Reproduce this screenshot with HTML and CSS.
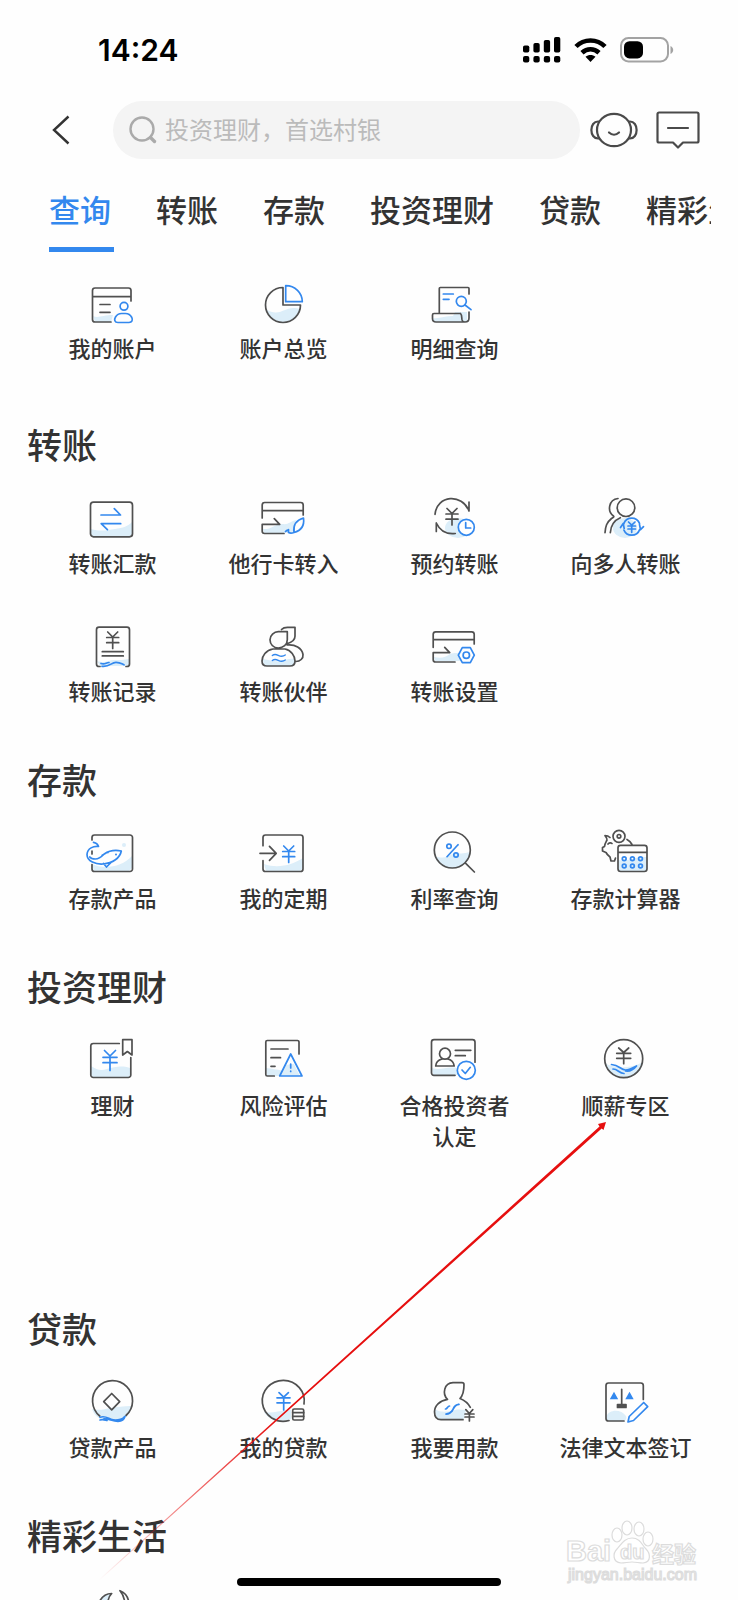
FILE: index.html
```html
<!DOCTYPE html>
<html lang="zh-CN">
<head>
<meta charset="UTF-8">
<meta name="viewport" content="width=device-width, initial-scale=1.0">
<title>全部功能</title>
<link rel="stylesheet" href="styles.css">
</head>
<body>
    <!-- shared icon parts -->
    <svg class="defs" width="0" height="0" aria-hidden="true">
        <defs>
            <path id="yen" d="M-5-9L0-4l5-5M-6-3.5H6M-6 1.7H6M0-4V7.5"/>
        </defs>
    </svg>

    <div class="status-bar">
        <span class="time">14:24</span>
        <div class="status-icons">
            <svg width="38" height="26" viewBox="0 0 38 26">
                <rect x="0" y="8.5" width="6.3" height="7" rx="1.8"/>
                <rect x="10.4" y="6" width="6.3" height="9.5" rx="1.8"/>
                <rect x="20.8" y="3" width="6.3" height="12.5" rx="1.8"/>
                <rect x="31" y="0" width="6.3" height="15.5" rx="1.8"/>
                <rect x="0" y="19" width="6.3" height="6.5" rx="2"/>
                <rect x="10.4" y="19" width="6.3" height="6.5" rx="2"/>
                <rect x="20.8" y="19" width="6.3" height="6.5" rx="2"/>
                <rect x="31" y="19" width="6.3" height="6.5" rx="2"/>
            </svg>
            <svg width="33" height="24" viewBox="0 0 33 24">
                <path d="M2 8.5C10 .4 23 .4 31 8.5M8 14.7c5-4.7 12-4.7 17 0" fill="none" stroke="#000" stroke-width="4.6"/>
                <path d="M16.500 24l-5-5.200c3-2.400 7-2.400 10 0z"/>
            </svg>
            <svg width="54" height="26" viewBox="0 0 54 26">
                <rect x="1" y="1" width="47" height="23.5" rx="7.5" fill="none" stroke="#a3a3a3" stroke-width="2"/>
                <rect x="4" y="4.2" width="19" height="17.2" rx="5.5"/>
                <path d="M50.500 9c3.600 1.500 3.600 6.500 0 8z" fill="#a3a3a3"/>
            </svg>
        </div>
    </div>

    <header class="navbar">
        <button type="button" class="icon-btn back" aria-label="返回">
            <svg width="18" height="30" viewBox="0 0 18 30"><path d="M16.500 1.500L2 15l14.500 13.500" stroke="#333" stroke-width="2.400" fill="none"/></svg>
        </button>
        <label class="search">
            <svg width="28" height="28" viewBox="0 0 28 28"><circle cx="13" cy="13" r="11.500"/><path d="M21.500 21.500l4 4" stroke-width="3.400"/></svg>
            <input type="search" placeholder="投资理财，首选村银" aria-label="搜索">
        </label>
        <button type="button" class="icon-btn" aria-label="客服">
            <svg class="line" width="48" height="36" viewBox="0 0 48 36"><ellipse cx="24" cy="18" rx="17" ry="16.200"/><path d="M8.500 9.500C-1 9-1 27 8.500 26.500M39.500 9.500c9.500-.5 9.500 17.500 0 17M19 20.500c3 2.800 7 2.800 10 0"/></svg>
        </button>
        <button type="button" class="icon-btn message" aria-label="消息">
            <svg class="line" width="44" height="38" viewBox="0 0 44 38"><path d="M3 1.500h38a1.500 1.500 0 0 1 1.500 1.500v27a1.500 1.500 0 0 1-1.500 1.500H27l-5 5-5-5H3A1.500 1.500 0 0 1 1.500 30V3A1.500 1.500 0 0 1 3 1.500zM12 17h20"/></svg>
        </button>
    </header>

    <nav class="tabs">
        <a href="#query" class="tab active">查询</a>
        <a href="#transfer" class="tab">转账</a>
        <a href="#deposit" class="tab">存款</a>
        <a href="#invest" class="tab">投资理财</a>
        <a href="#loan" class="tab">贷款</a>
        <a href="#life" class="tab">精彩生活</a>
    </nav>

    <main>
        <section class="section section-first" id="query">
            <div class="grid">
                <a href="#" class="item">
                    <svg class="icon" viewBox="0 0 56 56">
                        <path class="wash" d="M10 40c5 2.500 10-1 20-1l-2 7H12z"/>
                        <path d="M28 46H12a2.500 2.500 0 0 1-2.500-2.500v-29A2.500 2.500 0 0 1 12 12h33.500a2.500 2.500 0 0 1 2.500 2.500V25M9.500 20.700H48M17 28.500h10M17 36.300h10"/>
                        <circle class="blue" cx="41" cy="30.300" r="3.900"/>
                        <path class="blue" d="M35 46.500c-3.500 0-4-3-2.500-5.500 1.500-2.500 3.500-3.500 6-3.500h4c3 0 5 1.500 6.300 4 1.200 2.500.3 5-2.800 5z"/>
                    </svg>
                    <span>我的账户</span>
                </a>
                <a href="#" class="item">
                    <svg class="icon" viewBox="0 0 56 56">
                        <path class="wash" d="M12 33c8 6 14 3 19 1s8-3 15-1c-2 8-9 13-17 13s-15-5-17-13z"/>
                        <path d="M29 11.500V29h17.500A17.500 17.500 0 1 1 29 11.500z"/>
                        <path class="blue" d="M31.700 9.700v16h16.600c0-9-7.300-16-16.600-16z"/>
                    </svg>
                    <span>账户总览</span>
                </a>
                <a href="#" class="item">
                    <svg class="icon" viewBox="0 0 56 56">
                        <path class="wash" d="M8 42c6 1 12-2 20-2l2-4h12v10H9z"/>
                        <path d="M14.300 37V12.500a1 1 0 0 1 1-1H43a1 1 0 0 1 1 1V18M35.500 37.500H9a1.500 1.500 0 0 0-1.500 1.500v3.500C7.500 45 9 46 11 46h29c3 0 4-1.500 4-4v-6M35.500 37.500c3 3-1 8 4.500 8.500"/>
                        <path class="blue" d="M18.300 18h10M18.300 23.300H24M40 29l6 4.700"/>
                        <circle class="blue" cx="36.300" cy="25.300" r="5"/>
                    </svg>
                    <span>明细查询</span>
                </a>
            </div>
        </section>

        <section class="section" id="transfer">
            <h2>转账</h2>
            <div class="grid">
                <a href="#" class="item">
                    <svg class="icon" viewBox="0 0 56 56">
                        <path class="wash" d="M8 38c10 3 17 1 24 0 8-1 13-3 17-7v12l-2 3H10l-2-2z"/>
                        <rect x="7.500" y="11.200" width="42" height="34.600" rx="3"/>
                        <path class="blue" d="M18 24h19.500l-6.200-6.300M37.700 32.700H18.200l6.200 6"/>
                    </svg>
                    <span>转账汇款</span>
                </a>
                <a href="#" class="item">
                    <svg class="icon" viewBox="0 0 56 56">
                        <path class="wash" d="M9 38c8 1 13-6 20-5 5 1 8-3 13-4l-3 12-9 1H10z"/>
                        <path d="M8.200 27V14a2.500 2.500 0 0 1 2.500-2.500h36a2.500 2.500 0 0 1 2.500 2.500v10M8.200 19.700h41M20.300 27.700l5.400 5.600H8.200v7c0 1.500.8 2.200 2.300 2.200H30"/>
                        <path class="blue" d="M49.500 27c-7 2-10.500 7-9.500 14.500 7.500-2 10.500-7 9.500-14.500zM31.500 40.500c2-2 3-1 3-2v3c2 1 4 .5 5.500 0"/>
                    </svg>
                    <span>他行卡转入</span>
                </a>
                <a href="#" class="item">
                    <svg class="icon" viewBox="0 0 56 56">
                        <ellipse class="wash" cx="33" cy="37" rx="13" ry="10"/>
                        <path d="M10 23.300C12 4 37 2 44 20v-9M30.300 42.500c-8 1-15-2-19-10.500v8.500"/>
                        <use href="#yen" x="27" y="26.500"/>
                        <circle class="blue clear" cx="41.300" cy="36.300" r="8"/>
                        <path class="blue" d="M40.700 31.700V37h5"/>
                    </svg>
                    <span>预约转账</span>
                </a>
                <a href="#" class="item">
                    <svg class="icon" viewBox="0 0 56 56">
                        <ellipse class="wash" cx="29" cy="37" rx="12" ry="10"/>
                        <circle cx="30" cy="16.700" r="8.800"/>
                        <path d="M22 7.500c-9.500 1-11 13-4.500 17.500 1 1-1 1.500-2 2.500-5 4-6 8-6.500 14.200M24.300 26.700c-7 3-9.500 8-10 15"/>
                        <circle class="blue" cx="35.700" cy="35.700" r="8.500" stroke-dasharray="20 6.700" stroke-dashoffset="-3"/>
                        <path class="blue" d="M24.500 36.500l2.700-4 1 5M43.500 33.500l1 5.200 3-3"/>
                        <path class="blue" d="M32.500 31l3.200 3.200L39 31M32 35h7.500M32 38h7.500M35.700 34.500v6.800"/>
                    </svg>
                    <span>向多人转账</span>
                </a>
                <a href="#" class="item">
                    <svg class="icon" viewBox="0 0 56 56">
                        <path class="wash" d="M14 42c8 3 12-1 17-1s10 0 15-1v6l-4 1H17z"/>
                        <path d="M17 47.500h-1a2.500 2.500 0 0 1-2.500-2.500V10.700A2.500 2.500 0 0 1 16 8.200h28a2.500 2.500 0 0 1 2.500 2.500V45a2.500 2.500 0 0 1-2.500 2.500h-1M19.300 32.700h21M19.300 36.900h21"/>
                        <use href="#yen" x="29.700" y="22"/>
                        <path class="blue" d="M18 44.500c4 1.500 5-1 8-1M19 47.300c8 1 9-4 14-4 4 0 5 1 8 2.500"/>
                    </svg>
                    <span>转账记录</span>
                </a>
                <a href="#" class="item">
                    <svg class="icon" viewBox="0 0 56 56">
                        <path class="wash" d="M9 40c7 1 12 3 18 2 5-1 8-3 14-2 0 5-2 7-5 7H13c-3 0-4-3-4-7z"/>
                        <path d="M27.500 10.500c1.500-1.600 3-2.200 6-2.200H41v9c0 4-3 6-8 7.500M33.300 12.700v8c0 5-4 8.300-9 8.300s-8.300-4-8.300-8.300 4-8 8.300-8zM19 30h12c6 1 10 7 10 12 0 3.500-2 5-5 5H13c-3 0-5-1.500-5-5 0-5 4-11 11-12zM33 26c8-1 15 3 16 9.500.5 4-3 7-7 7"/>
                        <path class="blue thin" d="M18.300 36.500c5-4 7 4 13-.5M18.300 41.500c5-4 7 4 13-.5"/>
                    </svg>
                    <span>转账伙伴</span>
                </a>
                <a href="#" class="item">
                    <svg class="icon" viewBox="0 0 56 56">
                        <path class="wash" d="M9 38c7 2 12 0 16-3 4-2 8 0 12-2l-4 4 3 5H10z"/>
                        <path d="M8.200 28.300v-13a2.500 2.500 0 0 1 2.500-2.500h36a2.500 2.500 0 0 1 2.500 2.500V25M8.200 20.700h41M19.700 28.300l5 5.400H8.200v7c0 1.500.8 2.300 2.300 2.300H30"/>
                        <path class="blue" d="M37.300 28.700h8l4 7.500-4 7.500h-8l-4-7.500z"/>
                        <circle class="blue" cx="41.300" cy="36.200" r="3.200"/>
                    </svg>
                    <span>转账设置</span>
                </a>
            </div>
        </section>

        <section class="section" id="deposit">
            <h2>存款</h2>
            <div class="grid">
                <a href="#" class="item">
                    <svg class="icon" viewBox="0 0 56 56">
                        <path class="wash" d="M9 38c12 6 30 3 40-8v12l-3 3H11z"/>
                        <circle class="wash" cx="41" cy="19" r="2"/>
                        <path d="M9 14v-2.500A2.500 2.500 0 0 1 11.500 9H47a2.500 2.500 0 0 1 2.500 2.500V43a2.500 2.500 0 0 1-2.500 2.500H11.500A2.500 2.500 0 0 1 9 43v-4.500M9 25v3"/>
                        <path class="blue" d="M10.500 16.300c3 .7 4.500 2 5 4.200-5-.5-11 1.500-11.500 8 0 7 9 10 16 9.500 10-1 17-6 18.300-13-5-1-12-.5-17 3-3 3-6 5-9 5s-4.500-.5-5.500-2M19 29.500c2-1.500 4-3 6-3M20.500 37.500l3 3.500 5-5"/>
                        <circle class="dot" cx="33" cy="28.500" r="1"/>
                    </svg>
                    <span>存款产品</span>
                </a>
                <a href="#" class="item">
                    <svg class="icon" viewBox="0 0 56 56">
                        <path class="wash" d="M10 38c14 5 28 1 39-6v10l-3 3H12z"/>
                        <path d="M9 19.700v-8.200A2.500 2.500 0 0 1 11.500 9h35a2.500 2.500 0 0 1 2.500 2.500V43a2.500 2.500 0 0 1-2.500 2.500h-35A2.500 2.500 0 0 1 9 43v-8.300M6 27.300h16M15.500 20.300l6.700 7-6.700 7"/>
                        <use class="blue" href="#yen" x="34.700" y="29"/>
                    </svg>
                    <span>我的定期</span>
                </a>
                <a href="#" class="item">
                    <svg class="icon" viewBox="0 0 56 56">
                        <path class="wash" d="M10 30c8 3 12 1 18-2 5-1 11 0 17-2 0 9-8 16-18 16S11 36 10 30z"/>
                        <circle cx="27.300" cy="24" r="18"/>
                        <path d="M40.700 37.300l8.700 8.700"/>
                        <path class="blue" d="M33 18.700l-11 12"/>
                        <circle class="blue" cx="24" cy="20.300" r="2.200"/>
                        <circle class="blue" cx="31" cy="29" r="2.200"/>
                    </svg>
                    <span>利率查询</span>
                </a>
                <a href="#" class="item">
                    <svg class="icon" viewBox="0 0 56 56">
                        <path class="wash" d="M22 34c10 2 18-4 29-3v13l-2 2H24l-2-3z"/>
                        <circle cx="23" cy="10.300" r="6"/>
                        <circle cx="23" cy="10.300" r="1.800"/>
                        <path d="M14 11.500c-2-2-3-2-5-2 1 1.500 2.500 3 2 4.500-1 2-2.500 4-2.500 6.500l-2 1v3.500l3.500 1.500c1 2 2 3 4 4.500l1 4h3.500l1-3M12 18c1-1.500 3-1.500 4-.5M31 13.500c2 1 4 3 5 5"/>
                        <path d="M24.500 19.300h24a2.500 2.500 0 0 1 2.500 2.500v21a2.700 2.700 0 0 1-2.700 2.700H24.700a2.700 2.700 0 0 1-2.700-2.700v-21a2.500 2.500 0 0 1 2.500-2.500zM22 26.300h29"/>
                        <g class="blue"><circle cx="28.200" cy="32.700" r="1.900"/><circle cx="36.400" cy="32.700" r="1.900"/><circle cx="44.500" cy="32.700" r="1.900"/><circle cx="28.200" cy="40" r="1.900"/><circle cx="36.400" cy="40" r="1.900"/><circle cx="44.500" cy="40" r="1.900"/></g>
                    </svg>
                    <span>存款计算器</span>
                </a>
            </div>
        </section>

        <section class="section" id="invest">
            <h2>投资理财</h2>
            <div class="grid grid-tall">
                <a href="#" class="item">
                    <svg class="icon" viewBox="0 0 56 56">
                        <path class="wash" d="M8 33c6 4 10 5 16 3 8-2 14-4 23-1v7l-2 3H10l-2-3z"/>
                        <path d="M36.300 10.500h-26A2.500 2.500 0 0 0 7.800 13v29a2.500 2.500 0 0 0 2.500 2.500h35a2.500 2.500 0 0 0 2.500-2.500V24.500M39.700 6.700H49V22l-4.600-3.500L39.700 22z"/>
                        <path class="blue" d="M21.500 17.500l5.500 5.500 5.500-5.500M20 24.300h14M20 29.700h14M27 23v14.500"/>
                    </svg>
                    <span>理财</span>
                </a>
                <a href="#" class="item">
                    <svg class="icon" viewBox="0 0 56 56">
                        <path class="wash" d="M12 35c6 1 10 1 17 3l3-6 8-1 6 12H13z"/>
                        <path d="M20.300 43h-7a1.500 1.500 0 0 1-1.500-1.500V9a1.500 1.500 0 0 1 1.500-1.500h30A1.500 1.500 0 0 1 45 9v12M17 16h17M17 24.700h9.500M17 33.300h4"/>
                        <path class="blue" d="M36.700 21L48 43H25.700zM36.700 31v4M36.700 38.200v.3"/>
                    </svg>
                    <span>风险评估</span>
                </a>
                <a href="#" class="item">
                    <svg class="icon" viewBox="0 0 56 56">
                        <path class="wash" d="M7 35c8 3 15-2 25 0v7H8z"/>
                        <path d="M30 42.300H9A2.500 2.500 0 0 1 6.500 40V9.200A2.500 2.500 0 0 1 9 6.700h38.500A2.500 2.500 0 0 1 50 9.200v20M30.300 17.300h15.500M30.300 22.700h10M17 26c-4 1-6 3-6.300 7h18.500c-.5-4-2.500-6-6.200-7"/>
                        <circle cx="20" cy="20.700" r="5.500"/>
                        <circle class="blue clear" cx="41.300" cy="37.300" r="9"/>
                        <path class="blue" d="M37 37l3.300 3.500 5-6.200"/>
                    </svg>
                    <span>合格投资者<br>认定</span>
                </a>
                <a href="#" class="item">
                    <svg class="icon" viewBox="0 0 56 56">
                        <path class="wash" d="M9 30c9 6 26 6 38-1-1 10-10 16-19 16S10 38 9 30z"/>
                        <circle cx="27.700" cy="25.700" r="19"/>
                        <path d="M22.700 15l5 4.500 5-4.500M20.700 20.300h14M20.700 25.300h14M27.700 20v10.700"/>
                        <path class="blue" d="M15.500 31.500c8 .5 9 5.500 14 5.500 4 0 7-2 11-4-4 5-8 5.500-11 5M17 36c5 0 6 4.500 11 4.500"/>
                    </svg>
                    <span>顺薪专区</span>
                </a>
            </div>
        </section>

        <section class="section" id="loan">
            <h2>贷款</h2>
            <div class="grid">
                <a href="#" class="item">
                    <svg class="icon" viewBox="0 0 56 56">
                        <path class="wash" d="M9 34c8 2 12 0 19-1 6-1 12-2 20-2-1 8-5 13-12 15H22C15 43 11 40 9 34z"/>
                        <path d="M16.700 41A20 20 0 1 1 43 40.500M28.700 18.500l8 8.200-8 8.200-8-8.200z"/>
                        <path class="blue" d="M17 42.300c5-2 8 1 11 2s6 1 9.500 0 4-3 4.500-3c-1 4-4 5-7 5-6 0-9-3-14-2.500M17 45c3-1 5 0 7 .5"/>
                    </svg>
                    <span>贷款产品</span>
                </a>
                <a href="#" class="item">
                    <svg class="icon" viewBox="0 0 56 56">
                        <path class="wash" d="M10 37c7 2 17-2 27-2v9c-12 4-22 1-27-7z"/>
                        <path d="M50 29A21 20.500 0 1 0 35 45.500"/>
                        <path class="blue" d="M25 17.700l4.700 4.500 4.700-4.500M23 22.800h13M23 27.800h13M29.700 22.500V35"/>
                        <rect x="38.700" y="34" width="11" height="11" rx="1.500"/>
                        <path d="M38.700 37.700h11M38.700 41.300h11"/>
                    </svg>
                    <span>我的贷款</span>
                </a>
                <a href="#" class="item">
                    <svg class="icon" viewBox="0 0 56 56">
                        <path class="wash" d="M10 34c5 4 14 3 20 1 4-1 7 0 11 0l-2 9H14c-3-2-4-5-4-10z"/>
                        <path d="M38 44.700H16c-4 0-6.500-3-6.500-8 0-6 5-11 13-12.300C17 19 19 8 28 7.700h9c1.500 0 2 .5 2 2 0 6-.5 10-4 13.800 5 2 8 4.500 10.300 8.800"/>
                        <path class="blue" d="M34 29.300c-6 .5-5 4-7 7-1.500 2-3.500 2.500-6 2.800 5 0 6-3 7.500-5.500 1-2 2.500-4 5.500-4.300zM20.500 34c2 0 2-3 4-3"/>
                        <path d="M40.800 34.700l3.500 3.800 3.500-3.800M40 39h9M40 42h9M44.400 38.500V46"/>
                    </svg>
                    <span>我要用款</span>
                </a>
                <a href="#" class="item">
                    <svg class="icon" viewBox="0 0 56 56">
                        <path class="wash" d="M10 42c3-8 15-8 20-1 1 2 0 4-2 5H11z"/>
                        <path d="M28 46H12.500A2.500 2.500 0 0 1 10 43.500v-33A2.500 2.500 0 0 1 12.500 8h32.300a2.500 2.500 0 0 1 2.500 2.500v14M25.700 14.300v15"/>
                        <path class="solid" d="M21.500 29.500h8.500v3h-8.500z"/>
                        <path class="blue-solid" d="M18 16.700l4.200 7.500h-8.400zM33.500 16.700l4.200 7.500h-8.400z"/>
                        <path class="blue" d="M47.700 27.500l4 4.200L37.500 45.500 32 47l1.200-5.500z"/>
                    </svg>
                    <span>法律文本签订</span>
                </a>
            </div>
        </section>

        <section class="section" id="life">
            <h2>精彩生活</h2>
            <div class="grid">
                <a href="#" class="item">
                    <svg class="icon" viewBox="0 0 56 56">
                        <path class="wash" d="M17 18c2-4 5-6 11-6l-3 8v20H17z"/>
                        <path d="M17 18.500c3-5 6-7 11.700-7-3 3-3.700 5-3.700 9v20h-8zM37 8.700c5 2 7.500 5 8.500 10v22h-4v-22c-.5-4-2-7-4.500-10z"/>
                    </svg>
                </a>
            </div>
        </section>
    </main>

    <!-- pointer from the bottom left up to 顺薪专区 -->
    <svg class="pointer" width="508" height="460" viewBox="0 0 508 460" aria-hidden="true">
        <defs>
            <linearGradient id="fade" gradientUnits="userSpaceOnUse" x1="0" y1="458" x2="508" y2="0">
                <stop offset="0" stop-color="#e60f0f" stop-opacity="0"/>
                <stop offset=".15" stop-color="#e60f0f" stop-opacity=".5"/>
                <stop offset=".35" stop-color="#e60f0f"/>
            </linearGradient>
        </defs>
        <path fill="url(#fade)" d="M0 457.600L500.500 4.500 499 2l8-2-2.500 8-1.800-1.500L.6 458.200z"/>
    </svg>

    <svg class="watermark" width="134" height="70" viewBox="0 0 134 70" aria-label="Baidu 经验">
        <text x="0" y="41" font-size="29">Bai</text>
        <g>
            <ellipse cx="51" cy="15" rx="5" ry="7"/>
            <ellipse cx="61" cy="8" rx="5" ry="7"/>
            <ellipse cx="73" cy="9" rx="5" ry="7"/>
            <ellipse cx="82" cy="19" rx="5" ry="7"/>
            <path d="M66 18c8 0 10 7 14 11s6 13-3 14c-4 0-7-1-11-1s-7 1-11 1c-9-1-8-10-4-14s7-11 15-11z"/>
        </g>
        <text x="54" y="39" font-size="20">du</text>
        <text x="86" y="42" font-size="22">经验</text>
        <text class="url" x="2" y="60" font-size="16">jingyan.baidu.com</text>
    </svg>

    <div class="home-indicator"></div>
</body>
</html>
```
FILE: styles.css
```css
* {
    box-sizing: border-box;
}

body {
    margin: 0;
    height: 100vh;
    overflow: hidden;
    position: relative;
    background-color: #fefefe;
    color: #333;
    font-family: "Noto Sans CJK SC", "Noto Sans", sans-serif;
}

a {
    color: inherit;
    text-decoration: none;
}

.defs {
    position: absolute;
}

/* status bar */
.status-bar {
    display: flex;
    align-items: center;
    justify-content: space-between;
    height: 99px;
    padding: 0 64px 0 98px;
}

.time {
    font-family: Inter, sans-serif;
    font-size: 30px;
    font-weight: 600;
    color: #000;
}

.status-icons {
    display: flex;
    align-items: center;
    gap: 13px;
}

/* top navigation with search */
.navbar {
    display: flex;
    align-items: center;
    height: 58px;
    margin-top: 2px;
    padding: 0 38px 0 52px;
}

.icon-btn {
    display: flex;
    padding: 0;
    border: none;
    background: none;
    cursor: pointer;
}

.back {
    margin-right: 43px;
}

.message {
    margin-left: 18px;
}

.line {
    fill: none;
    stroke: #4a4a4a;
    stroke-width: 2.2;
    stroke-linecap: round;
    stroke-linejoin: round;
}

.search {
    flex: 1;
    display: flex;
    align-items: center;
    gap: 8px;
    height: 58px;
    margin-right: 10px;
    padding: 0 16px;
    border-radius: 29px;
    background-color: #f4f4f4;
}

.search svg {
    flex: none;
    fill: none;
    stroke: #aaa;
    stroke-width: 2.4;
    stroke-linecap: round;
}

.search input {
    flex: 1;
    min-width: 0;
    padding: 0 0 2px;
    border: none;
    outline: none;
    background: none;
    font-family: inherit;
    font-size: 24px;
    line-height: 36px;
}

.search input::placeholder {
    color: #bbb;
}

/* tabs */
.tabs {
    display: flex;
    gap: 42px;
    margin: 26px 27px 0 49px;
    overflow: hidden;
}

.tab {
    flex: none;
    padding: 0 3px 15px 0;
    border-bottom: 5px solid transparent;
    font-size: 31px;
    font-weight: 500;
    line-height: 47px;
}

.tab.active {
    color: #3388ee;
    border-bottom-color: #3388ee;
}

/* function groups */
main {
    padding: 0 27px;
}

.section {
    margin-bottom: 49px;
}

.section-first {
    padding-top: 24px;
    margin-bottom: 57px;
}

h2 {
    margin: 0 0 23px;
    font-size: 35px;
    font-weight: 500;
    line-height: 48px;
}

.grid {
    display: grid;
    grid-template-columns: repeat(4, 1fr);
    row-gap: 41px;
    align-content: start;
}

.grid-tall {
    min-height: 222px;
}

.item {
    display: flex;
    flex-direction: column;
    align-items: center;
    font-size: 22px;
    font-weight: 500;
    line-height: 31px;
    text-align: center;
}

/* icons */
.icon {
    width: 56px;
    height: 56px;
    margin-right: 3px;
    fill: none;
    stroke: #505050;
    stroke-width: 1.7;
    stroke-linecap: round;
    stroke-linejoin: round;
}

.icon .blue {
    stroke: #3388ee;
}

.icon .thin {
    stroke-width: 1.3;
}

.icon .clear {
    fill: #fff;
}

.icon .wash {
    fill: #dceef9;
    stroke: none;
}

.icon .solid {
    fill: #505050;
}

.icon .blue-solid,
.icon .dot {
    fill: #3388ee;
    stroke: none;
}

/* things lying over the page */
.pointer {
    position: absolute;
    left: 99px;
    top: 1122px;
}

.watermark {
    position: absolute;
    right: 38px;
    bottom: 10px;
    overflow: visible;
    fill: #fff;
    stroke: #dcdcdc;
    stroke-width: 1.2;
    font-family: "Liberation Sans", "Noto Sans CJK SC", sans-serif;
    font-weight: bold;
}

.watermark .url {
    font-weight: normal;
}

.home-indicator {
    position: absolute;
    left: 50%;
    bottom: 14px;
    width: 264px;
    height: 8px;
    margin-left: -132px;
    border-radius: 4px;
    background-color: #000;
}
```
